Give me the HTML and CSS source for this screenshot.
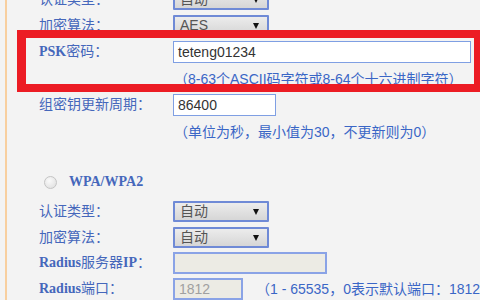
FILE: index.html
```html
<!DOCTYPE html>
<html lang="zh-CN">
<head>
<meta charset="utf-8">
<title>WPA-PSK</title>
<link rel="stylesheet" href="styles.css">
</head>
<body>
<div class="page">
  <div class="form">
    <div class="row row-first">
      <span class="label">认证类型：</span>
      <div class="select"><span class="val">自动</span><i class="arrow"></i></div>
    </div>
    <div class="row">
      <span class="label">加密算法：</span>
      <div class="select"><span class="val">AES</span><i class="arrow"></i></div>
    </div>
    <div class="row">
      <span class="label"><b class="lat">PSK</b>密码：</span>
      <div class="input input-psk">teteng01234</div>
    </div>
    <div class="row hint-row">
      <span class="label"></span>
      <span class="hint">（8-63个ASCII码字符或8-64个十六进制字符）</span>
    </div>
    <div class="row">
      <span class="label">组密钥更新周期：</span>
      <div class="input input-short">86400</div>
    </div>
    <div class="row hint-row">
      <span class="label"></span>
      <span class="hint">（单位为秒，最小值为30，不更新则为0）</span>
    </div>
    <div class="radio-row">
      <span class="radio"></span>
      <span class="radio-label">WPA/WPA2</span>
    </div>
    <div class="row row-after-radio">
      <span class="label">认证类型：</span>
      <div class="select"><span class="val">自动</span><i class="arrow"></i></div>
    </div>
    <div class="row">
      <span class="label">加密算法：</span>
      <div class="select"><span class="val">自动</span><i class="arrow"></i></div>
    </div>
    <div class="row row-tight">
      <span class="label"><b class="lat">Radius</b>服务器<b class="lat">IP</b>：</span>
      <div class="input input-ip disabled"></div>
    </div>
    <div class="row row-tight">
      <span class="label"><b class="lat">Radius</b>端口：</span>
      <div class="port-line">
        <div class="input input-port disabled">1812</div>
        <span class="hint">（1 - 65535，0表示默认端口：1812）</span>
      </div>
    </div>
  </div>
  <div class="highlight"></div>
</div>
</body>
</html>
```
FILE: styles.css
```css
html, body {
  margin: 0;
  padding: 0;
  width: 480px;
  height: 300px;
  overflow: hidden;
  background: #f3f3f3;
}

.page {
  position: relative;
  width: 480px;
  height: 300px;
  overflow: hidden;
  box-sizing: border-box;
  border-left: 2px solid #f8cf9f;
  margin-left: 5px;
}

.form {
  display: flex;
  flex-direction: column;
  padding-left: 32px;
  margin-top: -11px;
}

.row {
  display: grid;
  grid-template-columns: 134px auto;
  align-items: center;
  margin-top: 5px;
  white-space: nowrap;
}

.row-first { margin-top: 0; }
.row-after-radio { margin-top: 9px; }
.row-tight { margin-top: 4px; }

.label {
  font-family: "Liberation Serif", "Noto Sans CJK SC", serif;
  font-weight: normal;
  font-size: 14px;
  color: #4567bb;
  line-height: 18px;
}

.lat {
  font-weight: bold;
}

.select {
  box-sizing: border-box;
  width: 96px;
  height: 21px;
  border: 2px solid #6f8ad6;
  border-radius: 1px;
  background: linear-gradient(#ececec, #d6d6d6);
  display: flex;
  align-items: center;
  justify-content: space-between;
  padding: 0 8px 0 5px;
}

.val {
  font-family: "Liberation Sans", "Noto Sans CJK SC", sans-serif;
  font-size: 14px;
  color: #555;
  line-height: 17px;
}

.arrow {
  width: 0;
  height: 0;
  border-left: 3.5px solid transparent;
  border-right: 3.5px solid transparent;
  border-top: 6px solid #111;
}

.input {
  box-sizing: border-box;
  height: 22px;
  border: 1px solid #7f9fe3;
  background: #fff;
  font-family: "Liberation Sans", "Noto Sans CJK SC", sans-serif;
  font-size: 14px;
  color: #333;
  line-height: 20px;
  padding-left: 4px;
}

.input-psk { width: 298px; }
.input-short { width: 103px; }
.input-ip { width: 154px; border-width: 2px; border-color: #8aa3e6; }
.input-port { width: 70px; border-width: 2px; border-color: #8aa3e6; color: #a0a0a0; line-height: 18px; }
.disabled { background: #ecebe4; }

.hint-row { height: 21px; }

.hint {
  font-family: "Liberation Sans", "Noto Sans CJK SC", sans-serif;
  font-size: 14px;
  color: #3a66c6;
  line-height: 18px;
}

.hint-row .hint { margin-left: 1px; }

.port-line {
  display: flex;
  align-items: center;
  gap: 13px;
}

.radio-row {
  display: flex;
  align-items: center;
  height: 20px;
  margin-top: 30px;
  padding-left: 5px;
}

.radio {
  box-sizing: border-box;
  width: 13px;
  height: 13px;
  border-radius: 50%;
  border: 1px solid #c4c4c4;
  background: radial-gradient(circle at 40% 35%, #fafafa, #dcdcdc);
  margin-right: 12px;
}

.radio-label {
  font-family: "Liberation Serif", serif;
  font-weight: bold;
  font-size: 14px;
  color: #4567bb;
}

.highlight {
  position: absolute;
  left: 10px;
  top: 30px;
  width: 466px;
  height: 62px;
  box-sizing: border-box;
  border: 8px solid #ec1c24;
  border-left-width: 9px;
  border-right-width: 9px;
}
```
